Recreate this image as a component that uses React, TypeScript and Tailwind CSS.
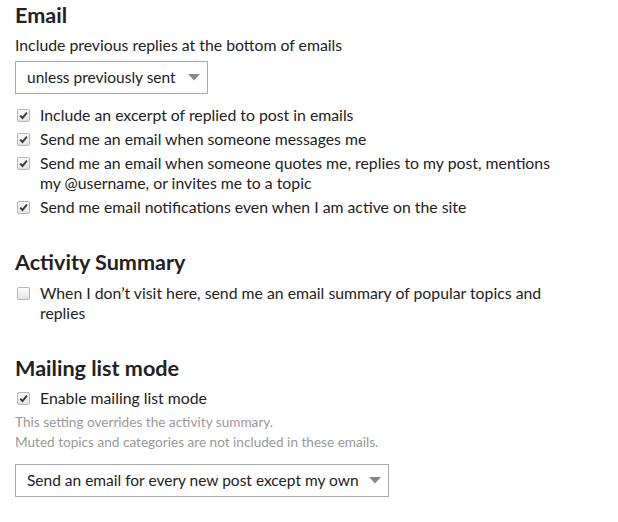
const Check = ({ checked }: { checked: boolean }) => (
  <span className="mt-[4px] mr-[10px] ml-[2px] flex h-[13px] w-[13px] shrink-0 items-center justify-center rounded-[2px] border border-[#b5b5b5] bg-gradient-to-b from-[#fcfcfc] to-[#e4e4e4]">
    {checked && (
      <svg width={9} height={9} viewBox="0 0 9 9">
        <path d="M1.2 4.6 L3.5 7 L7.9 1.6" fill="none" stroke="#3a3a3a" strokeWidth={1.9} />
      </svg>
    )}
  </span>
);

const Row = ({ checked, children }: { checked: boolean; children: React.ReactNode }) => (
  <label className="flex items-start mb-[4px] text-[15.8px] leading-[20px] text-[#222]">
    <Check checked={checked} />
    <span>{children}</span>
  </label>
);

const Select = ({ label, width }: { label: string; width: string }) => (
  <div className={`flex items-center justify-between h-[33px] whitespace-nowrap border border-[#aaaaaa] bg-white pl-[11px] pr-[7px] text-[15.5px] text-[#222] ${width}`}>
    <span>{label}</span>
    <svg width={12} height={7} viewBox="0 0 12 7" className="shrink-0">
      <path d="M0 0 H12 L6 6.5 Z" fill="#888" />
    </svg>
  </div>
);

export default function App() {
  return (
    <div className="w-[618px] h-[522px] bg-white px-[15px] pt-[2px] font-['Lato',sans-serif] text-[#222]">
      <div className="w-[540px]">
        <h2 className="text-[21.6px] leading-[26px] font-bold">Email</h2>
        <div className="mt-[7px] text-[15.8px] leading-[20px]">Include previous replies at the bottom of emails</div>
        <div className="mt-[6px] mb-[11px]">
          <Select label="unless previously sent" width="w-[193px]" />
        </div>
        <Row checked>Include an excerpt of replied to post in emails</Row>
        <Row checked>Send me an email when someone messages me</Row>
        <Row checked>Send me an email when someone quotes me, replies to my post, mentions my @username, or invites me to a topic</Row>
        <Row checked>Send me email notifications even when I am active on the site</Row>

        <h2 className="mt-[32px] text-[21.6px] leading-[26px] font-bold">Activity Summary</h2>
        <div className="mt-[8px]">
          <Row checked={false}>When I don’t visit here, send me an email summary of popular topics and replies</Row>
        </div>

        <h2 className="mt-[32px] text-[21.6px] leading-[26px] font-bold">Mailing list mode</h2>
        <div className="mt-[7px]">
          <Row checked>Enable mailing list mode</Row>
        </div>
        <div className="mt-[5px] text-[13.6px] leading-[19.5px] text-[#999]">
          <div>This setting overrides the activity summary.</div>
          <div>Muted topics and categories are not included in these emails.</div>
        </div>
        <div className="mt-[12px]">
          <Select label="Send an email for every new post except my own" width="w-[374px]" />
        </div>
      </div>
    </div>
  );
}
